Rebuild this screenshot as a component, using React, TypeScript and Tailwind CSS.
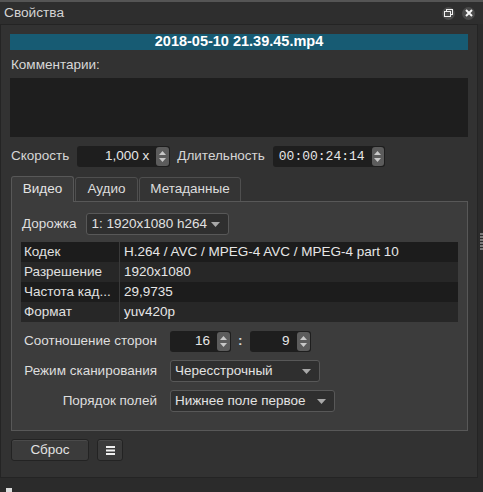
import React from 'react';

const sans = "font-['Liberation_Sans',Arial,sans-serif]";

const SpinArrows = () => (
  <div className="flex h-[19px] w-[13px] flex-col items-center justify-center gap-[3px] rounded-[3px] bg-[#5c5c5c]">
    <svg width="7" height="4" viewBox="0 0 7 4"><path d="M0 4 L3.5 0 L7 4 Z" fill="#c8c8c8" /></svg>
    <svg width="7" height="4" viewBox="0 0 7 4"><path d="M0 0 L3.5 4 L7 0 Z" fill="#c8c8c8" /></svg>
  </div>
);

const SpinBox = ({ value, width, mono = false, align = 'right' }: { value: string; width: string; mono?: boolean; align?: 'left' | 'right' }) => (
  <div className={`flex h-[21px] items-center rounded-[3px] bg-[#1e1e1e] pr-[1px] ${width}`}>
    <span
      className={`flex-1 pr-[7px] pl-[6px] text-[13.5px] text-[#e6e6e6] ${align === 'right' ? 'text-right' : 'text-left'} ${mono ? "font-['Liberation_Mono',monospace] text-[13px]" : ''}`}
    >
      {value}
    </span>
    <SpinArrows />
  </div>
);

const Combo = ({ value, width }: { value: string; width: string }) => (
  <div className={`flex h-[22px] items-center justify-between rounded-[3px] border border-[#585858] bg-[#2f2f2f] pl-[4px] pr-[8px] ${width}`}>
    <span className="text-[13.5px] text-[#e2e2e2]">{value}</span>
    <svg width="9" height="5" viewBox="0 0 9 5"><path d="M0 0 L9 0 L4.5 5 Z" fill="#a8a8a8" /></svg>
  </div>
);

const rows: [string, string][] = [
  ['Кодек', 'H.264 / AVC / MPEG-4 AVC / MPEG-4 part 10'],
  ['Разрешение', '1920x1080'],
  ['Частота кад...', '29,9735'],
  ['Формат', 'yuv420p'],
];

export default function App() {
  return (
    <div className={`relative h-[492px] w-[483px] overflow-hidden bg-[#2b2b2b] ${sans} text-[13.5px] text-[#d6d6d6]`}>
      {/* title bar */}
      <div className="h-[2px] bg-[#555555]" />
      <div className="flex h-[22px] items-center justify-between bg-[#2e2e2e] pl-[4px] pr-[8px]">
        <span className="text-[13.7px] text-[#d4d4d4]">Свойства</span>
        <div className="flex items-center gap-[7px]">
          <div className="flex h-[13px] w-[13px] items-center justify-center rounded-full bg-[#4a4a4a]">
            <svg width="9" height="8" viewBox="0 0 9 8">
              <rect x="2.5" y="0.5" width="6" height="5" fill="none" stroke="#f0f0f0" strokeWidth="1" />
              <rect x="0.5" y="2.5" width="6" height="5" fill="#4a4a4a" stroke="#f0f0f0" strokeWidth="1" />
            </svg>
          </div>
          <div className="flex h-[13px] w-[13px] items-center justify-center rounded-full bg-[#4a4a4a]">
            <svg width="8" height="8" viewBox="0 0 8 8">
              <path d="M1 1 L7 7 M7 1 L1 7" stroke="#f4f4f4" strokeWidth="2" />
            </svg>
          </div>
        </div>
      </div>

      {/* dock body */}
      <div className="flex h-[454px] w-[478px] flex-col border border-[#242424] bg-[#323232] px-[9px] pt-[9px]">
        <div className="flex h-[16px] items-center justify-center bg-[#175b73] text-[14.5px] font-bold text-white">
          2018-05-10 21.39.45.mp4
        </div>
        <div className="mt-[7px] h-[16px] pl-[1px] leading-[16px] text-[#d8d8d8]">Комментарии:</div>
        <div className="mt-[5px] h-[59px] bg-[#1e1e1e]" />

        <div className="mt-[9px] flex items-center pl-[1px]">
          <span>Скорость</span>
          <div className="ml-[8px]">
            <SpinBox value="1,000 x" width="w-[93px]" />
          </div>
          <span className="ml-[7px]">Длительность</span>
          <div className="ml-[8px]">
            <SpinBox value="00:00:24:14" width="w-[112px]" mono align="left" />
          </div>
        </div>

        {/* tabs */}
        <div className="mt-[9px] flex pl-[1px]">
          <div className="relative z-10 flex h-[26px] w-[63px] items-center justify-center rounded-t-[3px] border border-b-0 border-[#585858] bg-[#3c3c3c] text-[#e4e4e4]">
            Видео
          </div>
          <div className="ml-[1px] mt-[1px] flex h-[25px] w-[63px] items-center justify-center rounded-t-[3px] border border-[#4f4f4f] bg-[#343434] text-[#dcdcdc]">
            Аудио
          </div>
          <div className="ml-[1px] mt-[1px] flex h-[25px] w-[102px] items-center justify-center rounded-t-[3px] border border-[#4f4f4f] bg-[#343434] text-[#dcdcdc]">
            Метаданные
          </div>
        </div>
        <div className="-mt-[1px] ml-[1px] flex h-[230px] w-[457px] flex-col border border-[#585858] bg-[#3c3c3c] px-[9px] pt-[11px]">
          <div className="flex items-center">
            <span className="ml-[1px] text-[#dedede]">Дорожка</span>
            <div className="ml-[10px]">
              <Combo value="1: 1920x1080 h264" width="w-[143px]" />
            </div>
          </div>

          <div className="mt-[7px] flex flex-col">
            {rows.map(([k, v], i) => (
              <div key={k} className={`flex h-[20px] items-center ${i % 2 === 0 ? 'bg-[#1c1c1c]' : 'bg-[#272727]'}`}>
                <div className="flex h-full w-[99px] items-center border-r border-[#3a3a3a] pl-[3px] text-[#e0e0e0]">{k}</div>
                <div className="pl-[4px] text-[#e6e6e6]">{v}</div>
              </div>
            ))}
          </div>

          <div className="mt-[9px] grid grid-cols-[136px_auto] items-center gap-x-[13px] gap-y-[8px]">
            <span className="text-right text-[#dedede]">Соотношение сторон</span>
            <div className="flex items-center">
              <SpinBox value="16" width="w-[61px]" />
              <span className="mx-[7px] font-bold">:</span>
              <SpinBox value="9" width="w-[61px]" />
            </div>
            <span className="text-right text-[#dedede]">Режим сканирования</span>
            <Combo value="Чересстрочный" width="w-[150px]" />
            <span className="text-right text-[#dedede]">Порядок полей</span>
            <Combo value="Нижнее поле первое" width="w-[165px]" />
          </div>
        </div>

        <div className="mt-[8px] flex items-center gap-[8px] pl-[1px]">
          <button className="flex h-[22px] w-[78px] items-center justify-center rounded-[3px] border border-[#232323] bg-[#3b3b3b] text-[13.5px] text-[#e2e2e2] shadow-[inset_0_1px_0_#4a4a4a]">
            Сброс
          </button>
          <button className="flex h-[22px] w-[26px] items-center justify-center rounded-[3px] border border-[#232323] bg-[#3b3b3b] shadow-[inset_0_1px_0_#4a4a4a]">
            <svg width="9" height="9" viewBox="0 0 9 9">
              <rect x="0" y="0" width="9" height="2" fill="#f0f0f0" />
              <rect x="0" y="3.5" width="9" height="2" fill="#f0f0f0" />
              <rect x="0" y="7" width="9" height="2" fill="#f0f0f0" />
            </svg>
          </button>
        </div>
      </div>

      {/* side scroll grip */}
      <div className="absolute left-[480px] top-[233px] flex h-[17px] w-[3px] flex-col gap-[1px]">
        {Array.from({ length: 6 }).map((_, i) => (
          <div key={i} className="h-[2px] bg-[#7a7a7a]" />
        ))}
      </div>
      {/* tiny status icon */}
      <div className="absolute left-[6px] top-[488px] h-[4px] w-[6px] bg-[#dcdcdc]" />
    </div>
  );
}
